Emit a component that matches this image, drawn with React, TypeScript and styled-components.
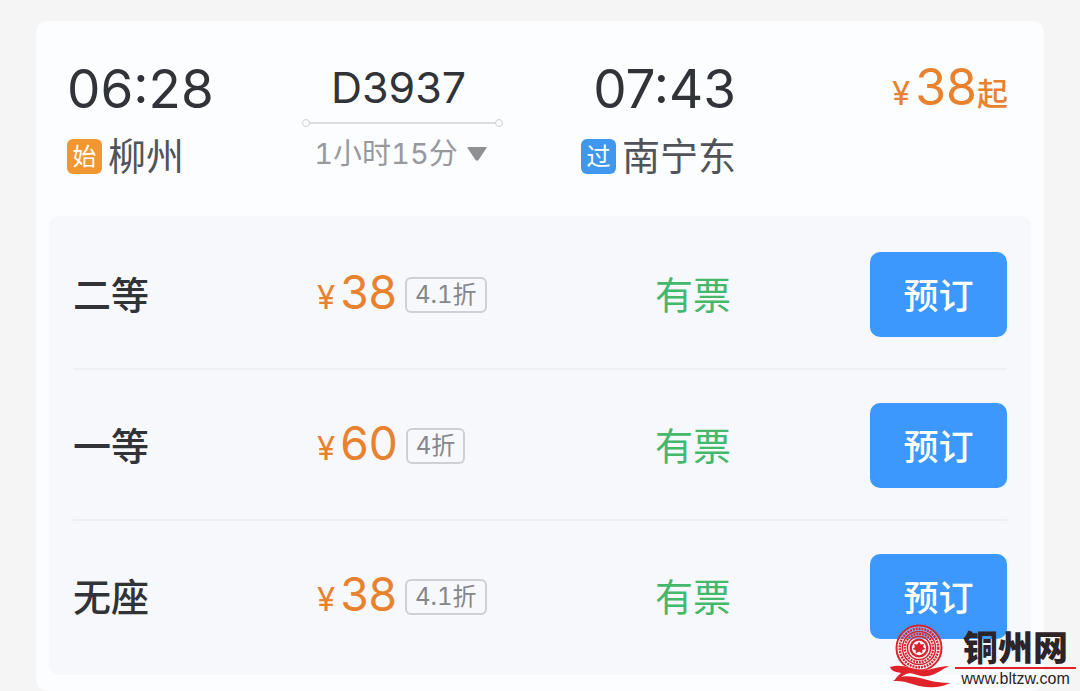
import React from 'react';
import styled, { createGlobalStyle } from 'styled-components';

const GlobalStyle = createGlobalStyle`
  * { box-sizing: border-box; }
  body {
    margin: 0;
    background: #f5f5f5;
    color: #303338;
    font-family: Inter, "Noto Sans CJK SC", sans-serif;
  }
`;

const Page = styled.main`
  position: relative;
  padding: 21px 36px 0;
`;

const Card = styled.article`
  padding: 0 13px 16px;
  border-radius: 12px;
  background: #fcfdff;
`;

const Summary = styled.header`
  display: grid;
  grid-template-columns: 235fr 201fr 274fr 231fr;
  padding: 35px 23px 34px 18px;
`;

const Stop = styled.section<{ $end?: boolean }>`
  display: flex;
  flex-direction: column;
  align-items: ${(p) => (p.$end ? 'flex-end' : 'flex-start')};
  padding-right: ${(p) => (p.$end ? '41px' : '0')};
`;

const Time = styled.time`
  font-size: 53px;
  line-height: 66px;
`;

const Station = styled.div`
  display: flex;
  align-items: center;
  gap: 6px;
  margin-top: 8px;
  color: #505359;
  font-size: 38px;
  line-height: 52px;
`;

const Badge = styled.span<{ $color: string }>`
  width: 35px;
  height: 35px;
  border-radius: 6px;
  background: ${(p) => p.$color};
  color: #fff;
  font-size: 24px;
  line-height: 35px;
  text-align: center;
`;

const Train = styled.section`
  display: flex;
  flex-direction: column;
  align-items: center;
`;

const TrainNumber = styled.h1`
  margin: 0;
  padding-right: 8px;
  font-size: 43px;
  font-weight: 400;
  line-height: 63px;
`;

const Track = styled.div`
  display: flex;
  align-items: center;
  align-self: stretch;
  height: 7px;

  &::before, &::after {
    content: '';
    width: 6px;
    height: 6px;
    border: 1px solid #cfd0d4;
    border-radius: 50%;
  }
`;

const TrackLine = styled.span`
  flex: 1;
  height: 2px;
  background: #dcdde1;
`;

const Duration = styled.button`
  display: flex;
  align-items: center;
  gap: 9px;
  margin: 4px 0 0;
  padding: 0 4px 0 0;
  border: 0;
  background: none;
  color: #98999d;
  font: inherit;
  font-size: 29px;
  font-variant-numeric: tabular-nums;
  line-height: 48px;
`;

const Price = styled.p<{ $large?: boolean }>`
  display: flex;
  align-items: baseline;
  justify-content: ${(p) => (p.$large ? 'flex-end' : 'flex-start')};
  margin: 0;
  color: #e8822f;
  font-size: ${(p) => (p.$large ? '50px' : '46px')};
  line-height: 63px;
`;

const Yen = styled.span`
  margin-right: 5px;
  font-size: 33px;
`;

const PriceSuffix = styled.span`
  font-size: 31px;
  font-weight: 500;
`;

const Seats = styled.ul`
  margin: 0;
  padding: 0 24px;
  border-radius: 10px;
  background: #f7f8fc;
  list-style: none;
`;

const SeatRow = styled.li`
  display: grid;
  grid-template-columns: 244fr 338fr 215fr 137px;
  align-items: center;
  padding: 33px 0 31px;

  &:first-child { padding-top: 36px; }
  &:last-child { padding-bottom: 36px; }
  & + & { border-top: 2px solid #eeeff2; }
`;

const SeatName = styled.h2`
  margin: 0;
  font-size: 38px;
  font-weight: 500;
  line-height: 54px;
`;

const Fare = styled.div`
  display: flex;
  align-items: center;
  gap: 8px;
`;

const Discount = styled.span`
  padding: 0 8px;
  border: 2px solid #cfd0d3;
  border-radius: 6px;
  color: #85878c;
  font-size: 24px;
  font-variant-numeric: tabular-nums;
  line-height: 32px;
`;

const Status = styled.span`
  color: #44b86b;
  font-size: 38px;
  line-height: 54px;
`;

const BookButton = styled.button`
  height: 85px;
  padding: 0 0 2px;
  border: 0;
  border-radius: 10px;
  background: #3c98fc;
  color: #fff;
  font: inherit;
  font-size: 35px;
  font-weight: 500;
`;

const Watermark = styled.a`
  position: absolute;
  right: 4px;
  bottom: 2px;
  display: flex;
  align-items: flex-end;
  color: #2c2427;
  text-decoration: none;
`;

const SiteText = styled.span`
  display: flex;
  flex-direction: column;
  align-items: center;
`;

const SiteName = styled.strong`
  width: 121px;
  border-bottom: 2px solid #e0222b;
  font-family: "Noto Sans CJK SC", sans-serif;
  font-size: 35px;
  font-weight: 900;
  line-height: 42px;
  text-align: center;
`;

const SiteUrl = styled.span`
  font-family: "Liberation Sans", sans-serif;
  font-size: 16px;
  line-height: 20px;
`;

const Emblem = () => (
  <svg width="70" height="68" viewBox="0 0 70 68" aria-hidden="true">
    <circle cx="34" cy="27" r="23" fill="#fff" fillOpacity="0.35" />
    <g fill="none" stroke="#d8232e">
      <circle cx="34" cy="27" r="22.500" strokeWidth="2" />
      <circle cx="34" cy="27" r="19.300" strokeWidth="2.400" strokeDasharray="2 .9" />
      <circle cx="34" cy="27" r="16.600" strokeWidth="1.500" />
      <circle cx="34" cy="27" r="14.200" strokeWidth="2.200" strokeDasharray="2 .9" />
      <circle cx="34" cy="27" r="11.600" strokeWidth="1.600" />
    </g>
    <circle cx="34" cy="27" r="9.500" fill="#d8232e" />
    <circle cx="34" cy="27" r="7.200" fill="#fff" />
    <path d="M34 20.500l1.800 3 3.300-.6-1.100 3.100 2.600 2-3.200 1.100-.2 3.400L34 30.600l-3.200 1.900-.2-3.400-3.200-1.100 2.600-2-1.100-3.100 3.300.6z" fill="#d8232e" />
    <path d="M6 44C19 42 27 49 38 49c9 0 15-4 24-5C57 55 46 65 26 62c-6-1-14-1-19-3l16-6C15 53 7 50 6 44z" fill="#fff" />
    <path d="M5 46c12-4 21 2 33 3 9 0 16-4 26-4-10 5-17 12-28 10-7-2-10-4-15-2-4 2-8 5-11 6 1-3 4-5 6-7-5-1-10-2-11-6z" fill="#e0222b" />
    <path d="M8 60c7-6 14-5 22-4 11 2 19 6 35 6-8 4-15 5-24 4-12-1-19-7-33-6z" fill="#e0222b" />
  </svg>
);

const seats = [
  { name: '二等', price: '38', discount: '4.1折' },
  { name: '一等', price: '60', discount: '4折' },
  { name: '无座', price: '38', discount: '4.1折' },
];

export default function App() {
  return (
    <Page>
      <GlobalStyle />
      <Card>
        <Summary>
          <Stop>
            <Time>06:28</Time>
            <Station><Badge $color="#f2962f">始</Badge>柳州</Station>
          </Stop>
          <Train>
            <TrainNumber>D3937</TrainNumber>
            <Track><TrackLine /></Track>
            <Duration>
              1小时15分
              <svg width="20" height="14" viewBox="0 0 20 14" aria-hidden="true">
                <path d="M1 0h18q1 0 .5 1l-8 12q-1.500 1.500-3 0L.5 1Q0 0 1 0z" fill="#8f9094" />
              </svg>
            </Duration>
          </Train>
          <Stop $end>
            <Time>07:43</Time>
            <Station><Badge $color="#3f98ee">过</Badge>南宁东</Station>
          </Stop>
          <Price $large><Yen>¥</Yen>38<PriceSuffix>起</PriceSuffix></Price>
        </Summary>
        <Seats>
          {seats.map((seat) => (
            <SeatRow key={seat.name}>
              <SeatName>{seat.name}</SeatName>
              <Fare>
                <Price><Yen>¥</Yen>{seat.price}</Price>
                <Discount>{seat.discount}</Discount>
              </Fare>
              <Status>有票</Status>
              <BookButton>预订</BookButton>
            </SeatRow>
          ))}
        </Seats>
      </Card>
      <Watermark href="#">
        <Emblem />
        <SiteText>
          <SiteName>铜州网</SiteName>
          <SiteUrl>www.bltzw.com</SiteUrl>
        </SiteText>
      </Watermark>
    </Page>
  );
}
